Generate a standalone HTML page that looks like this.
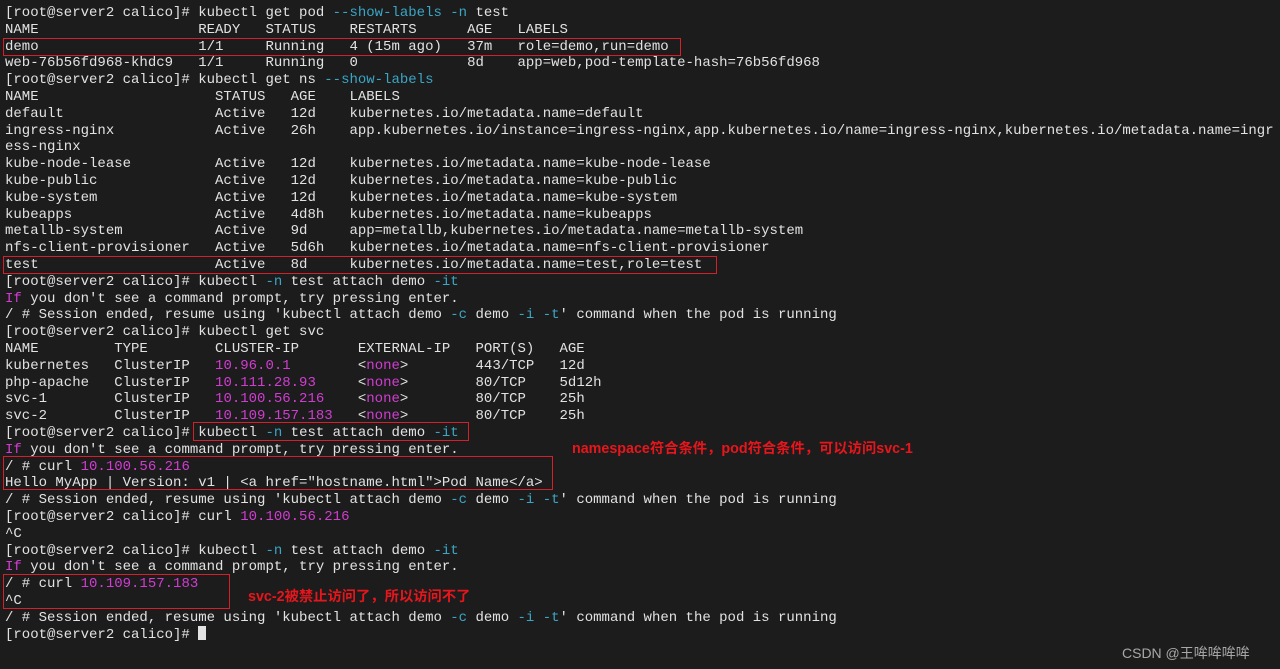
<!DOCTYPE html>
<html><head><meta charset="utf-8"><style>
html,body{margin:0;padding:0;background:#1c1c1c;width:1280px;height:669px;overflow:hidden}
pre{position:absolute;left:5px;top:5px;margin:0;font-family:"Liberation Mono",monospace;font-size:14px;line-height:16.8px;color:#e2e2e2}
.c{color:#3aa6c6}.m{color:#d23cd2}
.b{position:absolute;border:1px solid #d4202a}
.n{position:absolute;color:#e8161c;font-family:"Liberation Sans","Noto Sans CJK SC",sans-serif;font-weight:bold;font-size:14.3px}
.w{position:absolute;left:1122px;top:643px;color:#a8a8a8;font-family:"Liberation Sans","Noto Sans CJK SC",sans-serif;font-size:14px}
.cur{display:inline-block;width:8px;height:14px;background:#e2e2e2;vertical-align:-2px}
</style></head><body>
<pre>[root@server2 calico]# kubectl get pod <span class="c">--show-labels -n</span> test
NAME                   READY   STATUS    RESTARTS      AGE   LABELS
demo                   1/1     Running   4 (15m ago)   37m   role=demo,run=demo
web-76b56fd968-khdc9   1/1     Running   0             8d    app=web,pod-template-hash=76b56fd968
[root@server2 calico]# kubectl get ns <span class="c">--show-labels</span>
NAME                     STATUS   AGE    LABELS
default                  Active   12d    kubernetes.io/metadata.name=default
ingress-nginx            Active   26h    app.kubernetes.io/instance=ingress-nginx,app.kubernetes.io/name=ingress-nginx,kubernetes.io/metadata.name=ingr
ess-nginx
kube-node-lease          Active   12d    kubernetes.io/metadata.name=kube-node-lease
kube-public              Active   12d    kubernetes.io/metadata.name=kube-public
kube-system              Active   12d    kubernetes.io/metadata.name=kube-system
kubeapps                 Active   4d8h   kubernetes.io/metadata.name=kubeapps
metallb-system           Active   9d     app=metallb,kubernetes.io/metadata.name=metallb-system
nfs-client-provisioner   Active   5d6h   kubernetes.io/metadata.name=nfs-client-provisioner
test                     Active   8d     kubernetes.io/metadata.name=test,role=test
[root@server2 calico]# kubectl <span class="c">-n</span> test attach demo <span class="c">-it</span>
<span class="m">If</span> you don't see a command prompt, try pressing enter.
/ # Session ended, resume using 'kubectl attach demo <span class="c">-c</span> demo <span class="c">-i -t</span>' command when the pod is running
[root@server2 calico]# kubectl get svc
NAME         TYPE        CLUSTER-IP       EXTERNAL-IP   PORT(S)   AGE
kubernetes   ClusterIP   <span class="m">10.96.0.1</span>        &lt;<span class="m">none</span>&gt;        443/TCP   12d
php-apache   ClusterIP   <span class="m">10.111.28.93</span>     &lt;<span class="m">none</span>&gt;        80/TCP    5d12h
svc-1        ClusterIP   <span class="m">10.100.56.216</span>    &lt;<span class="m">none</span>&gt;        80/TCP    25h
svc-2        ClusterIP   <span class="m">10.109.157.183</span>   &lt;<span class="m">none</span>&gt;        80/TCP    25h
[root@server2 calico]# kubectl <span class="c">-n</span> test attach demo <span class="c">-it</span>
<span class="m">If</span> you don't see a command prompt, try pressing enter.
/ # curl <span class="m">10.100.56.216</span>
Hello MyApp | Version: v1 | &lt;a href="hostname.html"&gt;Pod Name&lt;/a&gt;
/ # Session ended, resume using 'kubectl attach demo <span class="c">-c</span> demo <span class="c">-i -t</span>' command when the pod is running
[root@server2 calico]# curl <span class="m">10.100.56.216</span>
^C
[root@server2 calico]# kubectl <span class="c">-n</span> test attach demo <span class="c">-it</span>
<span class="m">If</span> you don't see a command prompt, try pressing enter.
/ # curl <span class="m">10.109.157.183</span>
^C
/ # Session ended, resume using 'kubectl attach demo <span class="c">-c</span> demo <span class="c">-i -t</span>' command when the pod is running
[root@server2 calico]# <span class="cur"></span></pre>
<div class="b" style="left:3px;top:38px;width:676px;height:16px"></div>
<div class="b" style="left:3px;top:256px;width:712px;height:16px"></div>
<div class="b" style="left:193px;top:422px;width:274px;height:17px"></div>
<div class="b" style="left:3px;top:456px;width:548px;height:32px"></div>
<div class="b" style="left:3px;top:574px;width:225px;height:33px"></div>
<div class="n" style="left:572px;top:437px">namespace符合条件，pod符合条件，可以访问svc-1</div>
<div class="n" style="left:248px;top:585px">svc-2被禁止访问了，所以访问不了</div>
<div class="w">CSDN @王哞哞哞哞</div>
</body></html>
